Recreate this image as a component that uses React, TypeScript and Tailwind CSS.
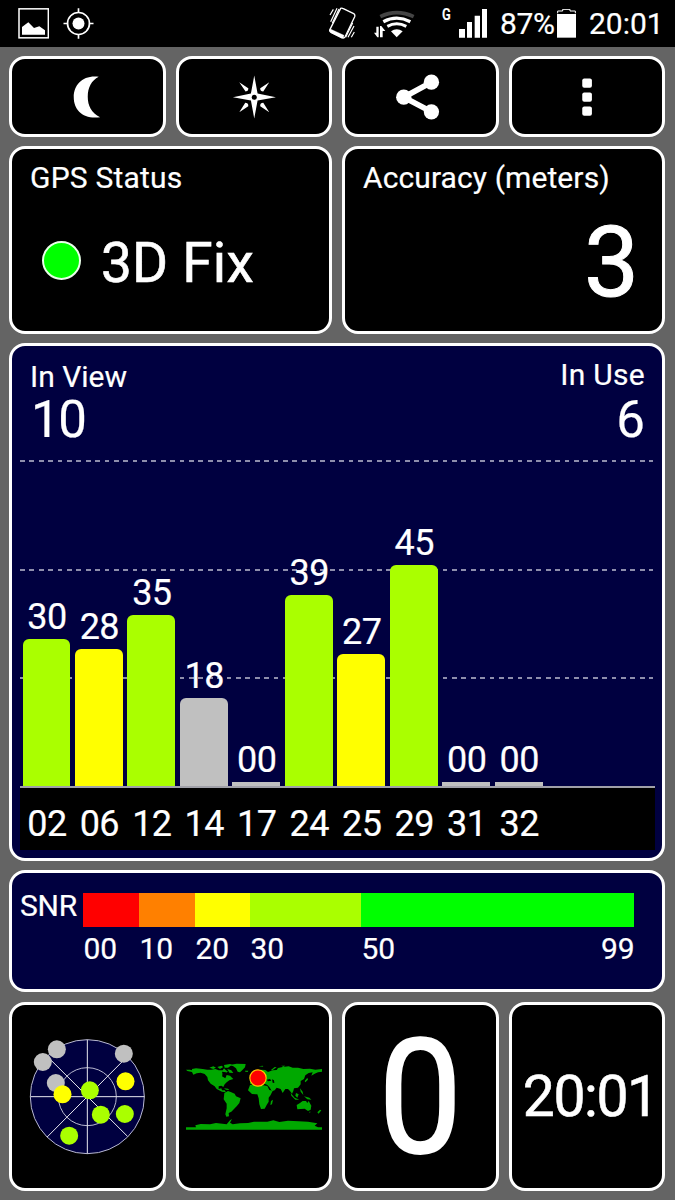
import type { ReactNode } from 'react';
import clsx from 'clsx';

interface Satellite {
  id: string;
  snr: string;
  height: number;
  color: string;
}

const satellites: Satellite[] = [
  { id: '02', snr: '30', height: 147, color: 'bg-[#aaff00]' },
  { id: '06', snr: '28', height: 137, color: 'bg-[#ffff00]' },
  { id: '12', snr: '35', height: 171, color: 'bg-[#aaff00]' },
  { id: '14', snr: '18', height: 88, color: 'bg-[#c0c0c0]' },
  { id: '17', snr: '00', height: 4.5, color: 'bg-[#c0c0c0]' },
  { id: '24', snr: '39', height: 191, color: 'bg-[#aaff00]' },
  { id: '25', snr: '27', height: 132, color: 'bg-[#ffff00]' },
  { id: '29', snr: '45', height: 221, color: 'bg-[#aaff00]' },
  { id: '31', snr: '00', height: 4.5, color: 'bg-[#c0c0c0]' },
  { id: '32', snr: '00', height: 4.5, color: 'bg-[#c0c0c0]' },
];

const snrRanges = [
  { label: '00', box: 'w-[56px] bg-[#ff0000]' },
  { label: '10', box: 'w-[56px] bg-[#ff8000]' },
  { label: '20', box: 'w-[55px] bg-[#ffff00]' },
  { label: '30', box: 'w-[111px] bg-[#aaff00]' },
  { label: '50', box: 'w-[273px] bg-[#00ff00]' },
];

const skyDots = [
  { x: 171, y: 162, fill: '#c0c0c0' },
  { x: 129, y: 200, fill: '#c0c0c0' },
  { x: 372, y: 175, fill: '#c0c0c0' },
  { x: 168, y: 263, fill: '#c0c0c0' },
  { x: 377, y: 258, fill: '#ffff00' },
  { x: 188, y: 297, fill: '#ffff00' },
  { x: 270, y: 285, fill: '#aaff00' },
  { x: 303, y: 358, fill: '#aaff00' },
  { x: 375, y: 356, fill: '#aaff00' },
  { x: 208, y: 421, fill: '#aaff00' },
];

function Card({ className, children }: { className?: string; children: ReactNode }) {
  return (
    <div className={clsx('overflow-hidden rounded-[16px] border-[3px] border-white', className)}>
      {children}
    </div>
  );
}

function StatusBar() {
  return (
    <div className="flex h-[47px] items-start bg-black">
      <svg className="mt-[8px] ml-[18px] h-[31px] w-[31px]" viewBox="54 24 93 93" fill="none">
        <rect x="57" y="26.500" width="88" height="87" stroke="#fff" strokeWidth="4.500" />
        <path d="M66 104V81L85 67L102 84L118 79L135 91V104Z" fill="#fff" />
      </svg>
      <svg className="mt-[8px] ml-[14px] h-[31px] w-[31px]" viewBox="189.500 24 93 93" fill="none" stroke="#fff">
        <circle cx="236" cy="70.500" r="33" strokeWidth="5" />
        <circle cx="236" cy="70.500" r="18" fill="#fff" stroke="none" />
        <path d="M236 25V39M236 102V116M191 70.500H205M267 70.500H281" strokeWidth="5" />
      </svg>

      {/* vibrate */}
      <svg className="mt-[6px] ml-[234px] h-[34px] w-[28px]" viewBox="24 18 84 102" fill="none" stroke="#fff">
        <path d="M62 25Q66 23 70 26L101 41Q106 44 104 50L75 111Q72 116 66 113L33 97Q27 94 30 88Z" strokeWidth="4" />
        <path d="M31 87L72 106L70 113Q66 116 62 113L33 98Q27 94 30 88Z" fill="#fff" />
        <path d="M30 45L40 28M32 65L51 25M37 69L57 27M77 112L98 69M84 112L102 78M94 112L103 96" strokeWidth="3.500" />
      </svg>

      {/* wifi with traffic arrows */}
      <svg className="mt-[10px] ml-[18px] h-[28px] w-[41px]" viewBox="162 30 123 84" fill="none">
        <path d="M181 50Q230 26 281 50" stroke="#444" strokeWidth="11" />
        <path d="M190 65Q230 44 271 65" stroke="#fff" strokeWidth="10" />
        <path d="M202 79Q230 64 259 79" stroke="#fff" strokeWidth="9" />
        <path d="M213 94Q230 82 248 94L230 112Z" fill="#fff" />
        <path d="M169 80H176V112H172L162 98H169ZM180 112V78H184L196 93H188V112Z" fill="#fff" />
      </svg>

      <div className="mt-[7px] ml-[27px] w-[17px]">
        <span className="block w-[12px] origin-left scale-x-80 text-[16px] leading-none font-semibold">G</span>
      </div>
      <svg className="mt-[9px] h-[29px] w-[28px]" viewBox="417 27 84 87" fill="#fff">
        <path d="M417 87H435V113H417ZM441 66H456V113H441ZM464 47H480V113H464ZM486 27H502V113H486Z" />
      </svg>

      <span className="mt-[9px] ml-[13px] w-[57px] text-[30px] leading-none tracking-[-0.3px]">87%</span>
      <svg className="mt-[9px] h-[29px] w-[19px]" viewBox="711 27 57 87" fill="none">
        <path d="M713 40V33H728V28H750V33H766V40" stroke="#fff" strokeWidth="3" />
        <path d="M711 42H768V113H711Z" fill="#fff" />
      </svg>
      <span className="mt-[9px] ml-[13px] text-[30px] leading-none">20:01</span>
    </div>
  );
}

function ToolButton({ children }: { children: ReactNode }) {
  return <Card className="flex items-center justify-center bg-black">{children}</Card>;
}

function Toolbar() {
  return (
    <div className="grid h-[81px] grid-cols-4 gap-[10px]">
      <ToolButton>
        <svg className="size-[60px]" viewBox="171.750 199.500 180 180" fill="#fff">
          <path d="M297 229C250 223 222 252 222 290C222 328 250 357 301 350C275 338 264 316 264 289C264 262 275 240 297 229Z" />
        </svg>
      </ToolButton>
      <ToolButton>
        <svg className="size-[60px]" viewBox="671.250 199.500 180 180" fill="#fff">
          <path d="M762 225L772 279L827 290L772 300L762 354L752 300L698 290L752 279Z" />
          <path d="M717 245L744 263Q746 272 736 273ZM807 245L789 273Q779 272 780 263ZM717 335L735 307Q745 307 744 317ZM807 335L780 317Q779 307 789 307Z" />
          <circle cx="762" cy="290" r="7.500" fill="#000" />
        </svg>
      </ToolButton>
      <ToolButton>
        <svg className="size-[60px]" viewBox="210.750 199.500 180 180" fill="#fff">
          <path d="M335 245L252 290L335 334" fill="none" stroke="#fff" strokeWidth="17" />
          <circle cx="335" cy="245" r="23" />
          <circle cx="252" cy="290" r="23" />
          <circle cx="335" cy="334" r="23" />
        </svg>
      </ToolButton>
      <ToolButton>
        <svg className="size-[60px]" viewBox="710.250 199.500 180 180" fill="#fff">
          <rect x="786" y="234" width="29" height="28" rx="6" />
          <rect x="786" y="276" width="29" height="28" rx="6" />
          <rect x="786" y="318" width="29" height="28" rx="6" />
        </svg>
      </ToolButton>
    </div>
  );
}

function GridLine({ className }: { className: string }) {
  return (
    <div
      className={clsx(
        'absolute right-[2px] left-0 h-[2px] bg-[repeating-linear-gradient(90deg,#8e8eac_0_4.8px,transparent_4.8px_9.39px)]',
        className
      )}
    />
  );
}

function SatelliteChart() {
  return (
    <Card className="h-[518px] bg-[#000040] pr-[7px] pl-[8px]">
      {/* Counters */}
      <div className="flex h-[114px] justify-between pr-[10px] pl-[10px]">
        <div className="pt-[16px]">
          <p className="text-[30px] leading-none">In View</p>
          <p className="mt-[2px] ml-[1px] text-[51px] leading-none tracking-[-1.5px]">10</p>
        </div>
        <div className="pt-[14px] text-right">
          <p className="text-[30px] leading-none tracking-[0.3px]">In Use</p>
          <p className="mt-[4px] text-[51px] leading-none">6</p>
        </div>
      </div>

      {/* Bars */}
      <div className="relative h-[328px] border-b-2 border-[#a0a0a8]">
        <GridLine className="top-0" />
        <GridLine className="top-[109px]" />
        <GridLine className="top-[217px]" />
        <div className="relative flex h-full items-end gap-[4.7px] pl-[2.500px]">
          {satellites.map((sat) => (
            <div key={sat.id} className="flex w-[47.800px] flex-col items-center">
              <span className="mb-[4px] pl-[1px] text-[36px] leading-none tracking-[-0.5px]">{sat.snr}</span>
              <div
                className={clsx('w-full', sat.color, sat.height > 10 && 'rounded-t-[6px]')}
                style={{ height: sat.height }}
              />
            </div>
          ))}
        </div>
      </div>

      {/* Satellite ids */}
      <div className="flex h-[62px] gap-[4.7px] bg-black pt-[18px] pl-[2.500px]">
        {satellites.map((sat) => (
          <span key={sat.id} className="w-[47.800px] pl-[1px] text-center text-[36px] leading-none tracking-[-0.5px]">
            {sat.id}
          </span>
        ))}
      </div>
    </Card>
  );
}

function SnrLegend() {
  return (
    <Card className="h-[122px] bg-[#000040]">
      <div className="flex pt-[20px] pl-[8px]">
        <span className="-mt-[2px] w-[63px] text-[30px] leading-[30px] tracking-[-0.2px]">SNR</span>
        <div>
          <div className="flex h-[34px]">
            {snrRanges.map((range) => (
              <div key={range.label} className={range.box}>
                <span className="block pt-[41px] pl-[0.5px] text-[30px] leading-none">{range.label}</span>
              </div>
            ))}
            <span className="-ml-[33px] block pt-[41px] text-[30px] leading-none">99</span>
          </div>
        </div>
      </div>
    </Card>
  );
}

function SkyView() {
  return (
    <svg className="h-[120px] w-[126px]" viewBox="72.500 125 378 360">
      <g fill="none" stroke="#b8b8d0" strokeWidth="3">
        <circle cx="262.500" cy="304" r="171" fill="#000040" />
        <circle cx="262.500" cy="304" r="87" />
      </g>
      <path
        d="M262.500 133V475M92 304H434M142 183L383 423M142 425L383 183"
        stroke="#e8e8f0"
        strokeWidth="3"
      />
      {skyDots.map((dot) => (
        <circle key={`${dot.x}-${dot.y}`} cx={dot.x} cy={dot.y} r="27" fill={dot.fill} />
      ))}
    </svg>
  );
}

function WorldMap() {
  return (
    <svg className="h-[67px] w-[136px]" viewBox="32 70 408 201" fill="#00a800">
      {/* North America */}
      <path d="M32 90L44 90L50 92L50 88L62 86L82 88L96 90L108 90L120 88L130 92L142 92L146 86L152 92L158 96L150 100L142 104L140 110L150 116L154 106L164 108L170 114L174 118L162 122L154 128L148 134L144 142L138 138L130 140L130 148L138 146L140 152L148 152L152 158L140 156L124 148L118 140L106 132L98 122L96 112L88 103L76 99L64 101L54 105L50 97L36 94Z" />
      <path d="M102 84L114 80L122 84L114 88ZM126 82L138 78L144 82L134 88ZM146 76L164 73L170 75L158 84L148 84ZM156 88L168 92L174 100L162 99ZM146 146L158 147L162 151L152 150Z" />
      {/* Greenland and Iceland */}
      <path d="M162 76L184 72L211 73L209 83L202 90L194 98L187 96L182 86L174 80ZM209 93L219 93L217 97L210 96Z" />
      {/* South America */}
      <path d="M147 160L158 154L168 158L178 162L182 170L196 176L192 190L184 200L176 208L168 216L160 220L161 230L153 231L150 224L154 206L154 192L145 179Z" />
      {/* Africa */}
      <path d="M224 136L240 133L252 138L264 137L276 139L282 151L292 153L286 166L280 174L280 186L274 196L268 207L257 208L252 194L250 176L246 164L230 163L218 152ZM287 184L293 180L290 194L285 196Z" />
      {/* Eurasia */}
      <path d="M224 126L234 124L228 112L240 110L248 96L258 90L270 91L278 97L292 92L304 91L308 85L322 82L340 80L352 84L368 84L384 88L404 87L420 90L440 88L440 96L428 98L418 102L408 108L412 98L400 100L390 107L386 118L376 124L376 134L368 144L356 146L354 154L350 162L344 154L338 148L330 148L322 160L316 148L304 144L298 152L290 155L282 142L276 136L264 130L256 132L248 124L236 131L224 133Z" />
      <path d="M250 80L262 78L264 81ZM286 92L298 82L304 83L292 91ZM318 78L330 78L324 82ZM388 124L396 114L398 120L390 128Z" />
      {/* South East Asia and Oceania */}
      <path d="M346 160L358 174L372 180L360 180L348 168ZM362 160L370 164L366 174L360 168ZM374 146L382 156L384 166L376 156ZM386 170L402 174L408 180L396 179Z" />
      <path d="M364 196L374 190L382 184L392 184L396 190L400 184L408 198L406 210L398 214L388 207L376 208L366 209ZM402 216L406 216L403 220ZM426 218L434 210L438 212L430 222Z" />
      {/* Antarctica */}
      <path d="M32 263H62L60 257L76 253L104 254L122 250L154 254L164 242L170 238L164 249L172 254L194 251L218 250L236 246L276 246L294 242L312 247L338 243L370 245L398 246L426 251L418 258L428 263H440V270H32Z" />
      {/* inland seas */}
      <path d="M274 120L284 118L288 123L278 125ZM290 119L296 122L297 130L292 129ZM140 96L152 98L150 106L142 106Z" fill="#000" />
      <circle cx="248" cy="115" r="24.500" fill="#ff0000" stroke="#ffc800" strokeWidth="3.500" />
    </svg>
  );
}

export default function App() {
  return (
    <div className="h-[1200px] w-[675px] overflow-hidden bg-[#646464] font-['Roboto',sans-serif] text-white [-webkit-text-stroke:0.2px_white]">
      <StatusBar />
      <main className="flex flex-col gap-[9px] pt-[9px] pr-[10px] pl-[9px]">
        <Toolbar />

        {/* GPS status and accuracy */}
        <div className="grid h-[188px] grid-cols-2 gap-[10px]">
          <Card className="bg-black px-[18px] pt-[14px]">
            <h2 className="text-[30px] leading-none tracking-[0.2px]">GPS Status</h2>
            <div className="mt-[43px] flex items-start pl-[12px]">
              <div className="mt-[5px] size-[39px] rounded-full border-2 border-[#e8ffe8] bg-[#00ff00]" />
              <p className="ml-[20px] text-[55px] leading-none tracking-[0.2px] [-webkit-text-stroke:0.6px_white]">
                3D Fix
              </p>
            </div>
          </Card>
          <Card className="bg-black px-[18px] pt-[14px]">
            <h2 className="text-[30px] leading-none tracking-[0.1px]">Accuracy (meters)</h2>
            <p className="mt-[21px] pr-[5px] text-right text-[98px] leading-none [-webkit-text-stroke:1px_white]">
              3
            </p>
          </Card>
        </div>

        <SatelliteChart />
        <SnrLegend />

        <div className="mt-[1px] grid h-[189px] grid-cols-4 gap-[10px]">
          <Card className="flex items-center justify-center bg-black">
            <SkyView />
          </Card>
          <Card className="flex items-center justify-center bg-black">
            <WorldMap />
          </Card>
          <Card className="bg-black pt-[13px] text-center">
            <p className="scale-x-93 text-[160px] leading-none [-webkit-text-stroke:2px_white]">0</p>
          </Card>
          <Card className="flex justify-center bg-black pt-[63px] pl-[7px]">
            <p className="text-[57px] leading-none tracking-[-1.4px] [-webkit-text-stroke:0.6px_white]">20:01</p>
          </Card>
        </div>
      </main>
    </div>
  );
}
